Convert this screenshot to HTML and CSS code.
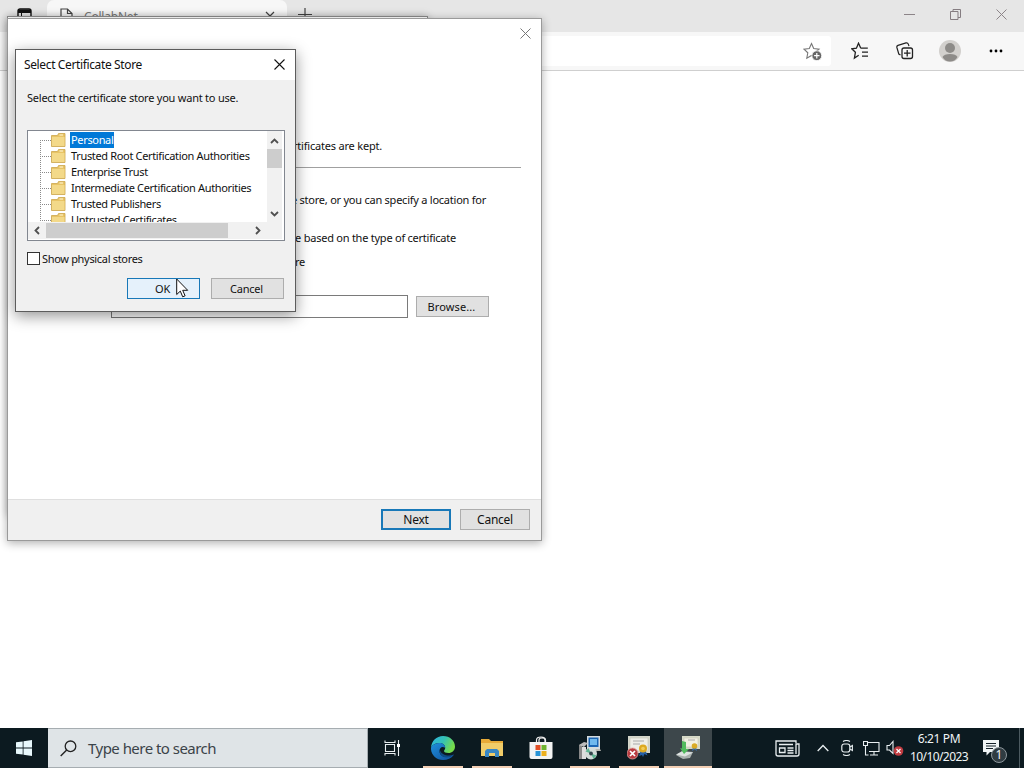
FILE: index.html
```html
<!DOCTYPE html>
<html lang="en">
<head>
  <meta charset="UTF-8">
  <title>Certificate Import</title>
  <link rel="stylesheet" href="styles.css">
</head>
<body>
  <div class="browser">
    <div class="tabbar">
      <div class="tab-actions">
        <svg width="15" height="15" viewBox="0 0 15 15"><rect x="1" y="1" width="13" height="13" rx="2" fill="none" stroke="#111" stroke-width="1.4"/><path d="M1 1.5h13v3.5H1z" fill="#111"/><path d="M4.5 5v9" stroke="#111"/></svg>
      </div>
      <div class="tab">
        <svg width="13" height="16" viewBox="0 0 13 16"><path d="M1 1h6.5l4.500 4.500V15H1zM7.500 1v4.500H12" fill="none" stroke="#444" stroke-width="1.200"/></svg>
        <span class="tab-title">CollabNet</span>
        <svg width="10" height="10" viewBox="0 0 10 10"><path d="M1 1l8 8M9 1l-8 8" stroke="#444" stroke-width="1.200"/></svg>
      </div>
      <svg class="new-tab" width="14" height="14" viewBox="0 0 14 14"><path d="M7 0v14M0 6.500h14" stroke="#444" stroke-width="1.200"/></svg>
      <div class="window-buttons">
        <span><svg width="11" height="11" viewBox="0 0 11 11"><path d="M0 5.500h11" stroke="#8c8488"/></svg></span>
        <span><svg width="11" height="11" viewBox="0 0 11 11"><path d="M.5 2.500h7.500v8H.5zM3 2.500v-2h7.500v8H8" fill="none" stroke="#857d81"/></svg></span>
        <span><svg width="11" height="11" viewBox="0 0 11 11"><path d="M.5.5l10 10M10.500.5l-10 10" stroke="#8c8488"/></svg></span>
      </div>
    </div>
    <div class="toolbar">
      <div class="address">
        <svg width="20" height="20" viewBox="0 0 20 20"><path d="M8.500 1.500l2.200 5 5.300.6-4 3.700 1 5.400-4.500-2.700-4.700 2.700 1-5.400L1 7.100l5.300-.6z" fill="none" stroke="#777" stroke-width="1.100"/><circle cx="13.800" cy="13.700" r="4.900" fill="#666" stroke="#fff" stroke-width=".8"/><path d="M13.800 11v5.400M11.100 13.700h5.400" stroke="#fff" stroke-width="1.200"/></svg>
      </div>
      <div class="toolbar-buttons">
        <span><svg width="18" height="18" viewBox="0 0 18 18"><path d="M9.800 6.200L7.500 1.200 5.400 6.200.8 6.800l3.600 3.500-1 5.800 4.300-2.800M9.800 6.200h7M11 10.200h6M11 14.200h6" fill="none" stroke="#222" stroke-width="1.300"/></svg></span>
        <span><svg width="18" height="18" viewBox="0 0 18 18"><path d="M4.500 13L2.800 12 .9 5.500Q.5 4 2 3.400L10 .9q1.700-.4 2.300 1.200l.7 2" fill="none" stroke="#222" stroke-width="1.200"/><rect x="6" y="6" width="10.500" height="10.500" rx="2" fill="#f7f7f7" stroke="#222" stroke-width="1.300"/><path d="M11.200 8v6.500M8 11.200h6.500" stroke="#222" stroke-width="1.300"/></svg></span>
        <span><svg width="22" height="22" viewBox="0 0 22 22"><circle cx="11" cy="11" r="11" fill="#d2d0cd"/><circle cx="11" cy="8" r="5" fill="#8d8b88"/><path d="M3.500 17q1.500-3 7.500-3t7.500 3q-2.500 4.500-7.500 4.500T3.500 17z" fill="#8d8b88"/></svg></span>
        <span><svg width="14" height="4" viewBox="0 0 14 4"><circle cx="2" cy="2" r="1.400"/><circle cx="7" cy="2" r="1.400"/><circle cx="12" cy="2" r="1.400"/></svg></span>
      </div>
    </div>
  </div>

  <div class="back-window"></div>

  <div class="wizard">
    <div class="wizard-title">
      <svg width="11" height="11" viewBox="0 0 11 11"><path d="M.5.5l10 10M10.500.5l-10 10" stroke="#777"/></svg>
    </div>
    <div class="wizard-header"><span>certificates are kept.</span></div>
    <div class="wizard-body">
      <p class="line-location">certificate store, or you can specify a location for</p>
      <p class="line-based">store based on the type of certificate</p>
      <p class="line-store">store</p>
      <div class="store-row">
        <div class="store-name"></div>
        <div class="button browse">Browse...</div>
      </div>
    </div>
    <div class="wizard-footer">
      <div class="button next">Next</div>
      <div class="button cancel">Cancel</div>
    </div>
  </div>

  <div class="dialog">
    <div class="dialog-title">
      <span>Select Certificate Store</span>
      <svg width="11" height="11" viewBox="0 0 11 11"><path d="M.5.5l10 10M10.500.5l-10 10" stroke="#111" stroke-width="1.100"/></svg>
    </div>
    <div class="dialog-body">
      <p class="hint">Select the certificate store you want to use.</p>
      <div class="tree">
        <div class="tree-main">
          <ul class="tree-items">
            <li><svg class="folder"><use href="#folder"/></svg><span class="selected">Personal</span></li>
            <li><svg class="folder"><use href="#folder"/></svg><span>Trusted Root Certification Authorities</span></li>
            <li><svg class="folder"><use href="#folder"/></svg><span>Enterprise Trust</span></li>
            <li><svg class="folder"><use href="#folder"/></svg><span>Intermediate Certification Authorities</span></li>
            <li><svg class="folder"><use href="#folder"/></svg><span>Trusted Publishers</span></li>
            <li><svg class="folder"><use href="#folder"/></svg><span>Untrusted Certificates</span></li>
          </ul>
          <div class="vscroll">
            <svg width="9" height="6" viewBox="0 0 9 6"><path d="M1 5l3.500-3.500L8 5" fill="none" stroke="#505050" stroke-width="1.800"/></svg>
            <div class="vthumb"></div>
            <svg width="9" height="6" viewBox="0 0 9 6"><path d="M1 1l3.500 3.500L8 1" fill="none" stroke="#505050" stroke-width="1.800"/></svg>
          </div>
        </div>
        <div class="hscroll">
          <svg width="6" height="9" viewBox="0 0 6 9"><path d="M5 1L1.500 4.500 5 8" fill="none" stroke="#505050" stroke-width="1.800"/></svg>
          <div class="hthumb"></div>
          <svg width="6" height="9" viewBox="0 0 6 9"><path d="M1 1l3.500 3.500L1 8" fill="none" stroke="#505050" stroke-width="1.800"/></svg>
        </div>
      </div>
      <div class="check-row">
        <div class="checkbox"></div>
        <span>Show physical stores</span>
      </div>
      <div class="dialog-buttons">
        <div class="button ok">OK</div>
        <div class="button dialog-cancel">Cancel</div>
      </div>
    </div>
  </div>

  <svg class="cursor" width="13" height="20" viewBox="0 0 13 20"><path d="M.7 1v15.500l3.600-3.400 2.400 5.700 2.400-1-2.400-5.500h5z" fill="#fff" stroke="#111"/></svg>

  <div class="taskbar">
    <div class="start">
      <svg width="16" height="16" viewBox="0 0 16 16"><path d="M0 2.300L6.700 1.400v6.200H0zM7.500 1.200L16 0v7.600H7.500zM0 8.400h6.700v6.200L0 13.700zM7.500 8.400H16V16l-8.500-1.200z" fill="#e8f8fc"/></svg>
    </div>
    <div class="search">
      <svg width="17" height="17" viewBox="0 0 17 17"><circle cx="10.500" cy="6.300" r="5.300" fill="none" stroke="#222" stroke-width="1.300"/><path d="M6.700 10.100L.7 16" stroke="#222" stroke-width="1.400"/></svg>
      <span>Type here to search</span>
    </div>
    <div class="taskview">
      <svg width="17" height="16" viewBox="0 0 17 16"><path d="M1 .5v2h10v-2M1 15.500v-2h10v2M1.500 4.500h9v7h-9zM14.500 0v16" fill="none" stroke="#e8eef0" stroke-width="1.100"/><path d="M13 4h3v3h-3z" fill="#fff"/></svg>
    </div>
    <div class="apps">
      <div class="app running">
        <svg width="24" height="24" viewBox="0 0 24 24">
          <defs>
            <linearGradient id="edge-top" x1="0" y1="0" x2="1" y2=".4"><stop offset="0" stop-color="#2bb3e4"/><stop offset=".55" stop-color="#35c2b4"/><stop offset="1" stop-color="#76db4a"/></linearGradient>
            <linearGradient id="edge-low" x1="0" y1="0" x2="1" y2="1"><stop offset="0" stop-color="#1f8fdc"/><stop offset="1" stop-color="#10509c"/></linearGradient>
          </defs>
          <path d="M0 11.500C.5 5 5.500 0 12 0c7 0 12 5 12 10.500 0 4-3 6.500-6.500 6.500-3 0-4.500-1-4.500-2 0-.8 1.200-1.200 1.200-3.200C14.200 9 11.500 7 8.500 7 4.500 7 1.300 9 0 11.500z" fill="url(#edge-top)"/>
          <path d="M0 11.500C1.500 8.500 4.800 7 8.500 7c3 0 5.700 2 5.700 4.800C11 9.500 8.500 12 8.500 15c0 4.500 4.500 6.500 8 6 2.500-.3 4-1.300 5.500-2.300.5-.3.800.1.500.5C20.500 22 16.500 24 12 24 5 24-.5 18.500 0 11.500z" fill="url(#edge-low)"/>
          <path d="M8.800 13.500c-1 4 2 8 6.500 8 3 0 5.300-1.300 6.700-2.800-4 1.800-12 .8-13.200-5.200z" fill="#0d4b85"/>
        </svg>
      </div>
      <div class="app running">
        <svg width="22" height="18" viewBox="0 0 22 18"><path d="M0 0h8l2 2h12v15H0z" fill="#e8ab38"/><path d="M0 4h22v13H0z" fill="#f1cd69"/><path d="M4 18v-6l2-2h10l2 2v6h-4v-4H8v4z" fill="#3987c4"/></svg>
      </div>
      <div class="app">
        <svg width="24" height="24" viewBox="0 0 24 24"><path d="M7.500 6V4q0-3 4.500-3t4.500 3v2M10 6V4q0-2 3-2t3 2v2" fill="none" stroke="#eee" stroke-width="1.200"/><path d="M.5 6h23v15q0 2-2 2h-19q-2 0-2-2z" fill="#f4f4f4"/><path d="M6.500 9h5v5h-5z" fill="#e34f26"/><path d="M12.500 9h5v5h-5z" fill="#70b430"/><path d="M6.500 15h5v5h-5z" fill="#2a94d6"/><path d="M12.500 15h5v5h-5z" fill="#edb120"/></svg>
      </div>
      <div class="app running">
        <svg width="24" height="24" viewBox="0 0 24 24"><path d="M9 0h13v13H9z" fill="#d5dcdf"/><path d="M10.500 1.500h10V11h-10z" fill="#1b66b4"/><path d="M12 3h7v6h-7z" fill="#6fb9ee"/><path d="M11 13h11l1 2H12z" fill="#b8b8b0"/><path d="M1 9l3-1v15H1z" fill="#888"/><path d="M4 11h4v12H4z" fill="#ddd"/><path d="M1 9l5-3 4 1-4 4z" fill="#bbb"/><circle cx="13" cy="17.500" r="6" fill="#d3dcd9"/><path d="M13 17.500l-5.500-2 3-3.500zM13 17.500l5.500 2-3 3.500z" fill="#5fb592"/><circle cx="13" cy="17.500" r="1.900" fill="#34464c"/></svg>
      </div>
      <div class="app running">
        <svg width="24" height="24" viewBox="0 0 24 24"><path d="M1 0h22v17H1z" fill="#d4d6cb"/><path d="M3 2h18v13H3z" fill="#eeeee8" stroke="#c5c7b6" stroke-width=".6"/><path d="M6 5h11M6 8h7" stroke="#aaa"/><path d="M13.500 15l-1.500 5 3-1 1 2 1.500-3 3 1.500-2-5z" fill="#245fa6"/><circle cx="16" cy="12.500" r="4" fill="#dca921"/><circle cx="16" cy="12.500" r="1.800" fill="#f2cd58"/><circle cx="5.500" cy="17.500" r="5.500" fill="#b93b40" stroke="#dda5a0" stroke-width=".8"/><path d="M3 15l5 5M8 15l-5 5" stroke="#fff" stroke-width="1.700"/></svg>
      </div>
      <div class="app running active">
        <svg width="24" height="24" viewBox="0 0 24 24"><path d="M6 0h18v13H6z" fill="#d6dac8"/><path d="M8 2h14v9H8z" fill="#f1f0e3" stroke="#c9cbbb" stroke-width=".6"/><path d="M12 4h7" stroke="#aaa"/><path d="M17 11l-1 4 2.500-1.500L21 15l-1-4z" fill="#3a6ea8"/><circle cx="18.500" cy="10" r="2.800" fill="#d9ab26"/><path d="M0 19l6-4 11 1-3 6-7 1z" fill="#aab1af"/><path d="M0 18.500l6-3 11 1-8 4z" fill="#dfe4e2"/><path d="M6 5l4 1v7h3l-5 5-4-6 2 .5z" fill="#52bb5e"/></svg>
      </div>
    </div>
    <div class="tray">
      <svg class="news" width="25" height="17" viewBox="0 0 25 17"><path d="M21 3V1H1v13q0 2 2 2h19q2 0 2-2V4h-3v10" fill="none" stroke="#e8eef0" stroke-width="1.300"/><path d="M4 4.500h14M12.500 8h6M12.500 10.500h6M12.500 13h6M4.500 8h5.500v4.500H4.500z" fill="none" stroke="#e8eef0" stroke-width="1.300"/></svg>
      <svg class="chevron" width="12" height="8" viewBox="0 0 12 8"><path d="M.7 7L6 1.500 11.300 7" fill="none" stroke="#e8eef0" stroke-width="1.300"/></svg>
      <svg class="meet" width="12" height="16" viewBox="0 0 12 16"><path d="M2 1.500q3.500-2 7 0M2 14.500q3.500 2 7 0M9 7l2.400-1.500v5L9 9" fill="none" stroke="#e8eef0" stroke-width="1.100"/><rect x=".8" y="4" width="8" height="8" rx="2.200" fill="none" stroke="#e8eef0" stroke-width="1.200"/></svg>
      <svg class="network" width="17" height="15" viewBox="0 0 17 15"><path d="M5 1.500h11v9H6M11 11v3M7 14h8M.5.5h4v4h-4zM2.500 4.500V14h3" fill="none" stroke="#e8eef0" stroke-width="1.100"/></svg>
      <svg class="volume" width="18" height="16" viewBox="0 0 18 16"><path d="M1 5.500h2.500L7 1.500v12L3.500 10H1z" fill="none" stroke="#e8eef0" stroke-width="1.100"/><circle cx="12.500" cy="11" r="4.800" fill="#c03b40"/><path d="M10.500 9l4 4M14.500 9l-4 4" stroke="#fff" stroke-width="1.200"/></svg>
      <div class="clock"><span class="time">6:21 PM</span><span class="date">10/10/2023</span></div>
      <div class="notify">
        <svg width="17" height="16" viewBox="0 0 17 16"><path d="M0 0h16v12H7l-3.500 3.500V12H0z" fill="#f1f5f6"/><path d="M3 3.500h10M3 6h10M3 8.500h7" stroke="#15222a"/></svg>
        <span class="badge">1</span>
      </div>
      <div class="show-desktop"></div>
    </div>
  </div>

  <svg width="0" height="0" class="symbols">
    <symbol id="folder" viewBox="0 0 15 14">
      <path d="M.5 2.500h6l1-2H14v13H.5z" fill="#e8c466" stroke="#cba64c" stroke-width=".8"/>
      <path d="M1 4h12.500v9H1z" fill="#f3d989"/>
      <path d="M8.500 2h3.500" stroke="#fff7d8"/>
    </symbol>
  </svg>
</body>
</html>
```
FILE: styles.css
```css
* {
  box-sizing: border-box;
}
body {
  margin: 0;
  width: 1024px;
  height: 768px;
  overflow: hidden;
  position: relative;
  display: flex;
  flex-direction: column;
  background-color: #fff;
  color: #111;
  font-family: "Noto Sans", sans-serif;
  font-size: 11px;
}
svg {
  display: block;
  flex: none;
}
p, ul {
  margin: 0;
  padding: 0;
}
p, span {
  white-space: nowrap;
}
.symbols {
  position: absolute;
}

/* browser */
.browser {
  flex: 1;
}
.tabbar {
  height: 32px;
  background-color: #e6e6e6;
  display: flex;
}
.tab-actions {
  width: 47px;
  padding: 8px 0 0 17px;
}
.tab {
  width: 240px;
  background-color: #f7f7f7;
  border-radius: 7px 7px 0 0;
  display: flex;
  align-items: center;
  padding: 0 12px 0 13px;
}
.tab-title {
  flex: 1;
  padding-left: 11px;
  font-size: 12px;
  letter-spacing: -.2px;
  color: #777;
}
.new-tab {
  margin: 8px 0 0 11px;
}
.window-buttons {
  margin-left: auto;
  display: flex;
  height: 29px;
}
.window-buttons span {
  width: 46px;
  display: flex;
  align-items: center;
  justify-content: center;
}
.toolbar {
  height: 39px;
  background-color: #f7f7f7;
  border-bottom: 1px solid #cfcfcf;
  display: flex;
  align-items: center;
  justify-content: flex-end;
  padding-right: 6px;
}
.address {
  width: 531px;
  height: 30px;
  margin-right: 7px;
  background-color: #fff;
  border-radius: 3px;
  display: flex;
  align-items: center;
  justify-content: flex-end;
  padding: 1px 8px 0 0;
}
.toolbar-buttons {
  display: flex;
}
.toolbar-buttons span {
  width: 45px;
  display: flex;
  align-items: center;
  justify-content: center;
  padding-right: 1px;
}
.toolbar-buttons span:last-child {
  padding-right: 0;
}

/* windows */
.back-window {
  position: absolute;
  left: 7px;
  top: 16px;
  width: 421px;
  height: 500px;
  background-color: #fff;
  border: 1px solid #8a8a8a;
  box-shadow: 0 0 8px rgba(0, 0, 0, .25);
}
.wizard {
  position: absolute;
  left: 7px;
  top: 18px;
  width: 535px;
  height: 523px;
  background-color: #fff;
  border: 1px solid #9a9a9a;
  box-shadow: 0 2px 9px rgba(0, 0, 0, .32);
  display: flex;
  flex-direction: column;
}
.wizard-title {
  height: 30px;
  display: flex;
  justify-content: flex-end;
  padding: 9px 10px 0 0;
}
.wizard-header {
  height: 119px;
  margin: 0 20px;
  border-bottom: 1px solid #a0a0a0;
  display: flex;
  align-items: flex-end;
  justify-content: flex-end;
  padding: 0 139px 14px 0;
  letter-spacing: -.2px;
}
.wizard-body {
  flex: 1;
  padding-left: 103px;
}
.wizard-body p {
  line-height: 16px;
  text-align: right;
  letter-spacing: -.24px;
}
.line-location {
  width: 375px;
  padding-top: 24px;
}
.line-based {
  width: 345px;
  padding-top: 22px;
}
.line-store {
  width: 194px;
  padding-top: 8px;
}
.store-row {
  display: flex;
  gap: 8px;
  margin-top: 25px;
}
.store-name {
  width: 297px;
  height: 23px;
  border: 1px solid #7a7a7a;
}
.button {
  background-color: #e1e1e1;
  border: 1px solid #adadad;
  display: flex;
  align-items: center;
  justify-content: center;
}
.browse {
  width: 73px;
  height: 21px;
  margin-top: 1px;
  padding-right: 2px;
  letter-spacing: .1px;
}
.wizard-footer {
  height: 41px;
  background-color: #f0f0f0;
  border-top: 1px solid #dfdfdf;
  display: flex;
  justify-content: flex-end;
  gap: 9px;
  padding: 9px 11px 0 0;
  font-size: 12px;
  letter-spacing: -.25px;
}
.next, .cancel {
  width: 70px;
  height: 21px;
}
.next {
  border: 2px solid #1878b8;
}

/* certificate store dialog */
.dialog {
  position: absolute;
  left: 15px;
  top: 49px;
  width: 281px;
  height: 263px;
  background-color: #f0f0f0;
  border: 1px solid #5c5c5c;
  box-shadow: 0 4px 14px rgba(0, 0, 0, .42);
}
.dialog-title {
  height: 30px;
  background-color: #fff;
  display: flex;
  align-items: center;
  justify-content: space-between;
  padding: 0 10px 1px 8px;
  font-size: 12px;
  letter-spacing: -.37px;
}
.dialog-body {
  padding: 10px 11px 0;
}
.hint {
  height: 40px;
  line-height: 16px;
  letter-spacing: -.23px;
}
.tree {
  width: 258px;
  height: 111px;
  border: 1px solid #828790;
  background-color: #fff;
}
.tree-main {
  display: flex;
  height: 91px;
}
.tree-items {
  width: 239px;
  overflow: hidden;
  list-style: none;
  padding: 1px 0 0 12px;
  letter-spacing: -.34px;
  background: repeating-linear-gradient(#8a8a8a 0 1px, #fff 1px 2px) 12px 9px / 1px 90px no-repeat;
}
.tree-items li {
  height: 16px;
  display: flex;
  align-items: center;
}
.tree-items li::before {
  content: "";
  width: 11px;
  height: 1px;
  background: repeating-linear-gradient(90deg, #8a8a8a 0 1px, #fff 1px 2px);
}
.tree-items span {
  line-height: 16px;
  margin-left: 4px;
  padding: 0 1px;
}
.tree-items .selected {
  background-color: #0078d7;
  color: #fff;
}
.folder {
  width: 15px;
  height: 14px;
}
.vscroll {
  width: 15px;
  background-color: #f1f1f1;
  display: flex;
  flex-direction: column;
  align-items: center;
  padding: 7px 0 5px;
}
.vthumb {
  width: 15px;
  height: 19px;
  margin: 5px 0 auto;
  background-color: #cdcdcd;
}
.hscroll {
  height: 17px;
  margin-right: 2px;
  background-color: #f1f1f1;
  display: flex;
  align-items: center;
  padding: 0 0 1px 6px;
}
.hthumb {
  width: 182px;
  height: 15px;
  margin: 0 27px 0 6px;
  background-color: #cdcdcd;
}
.check-row {
  display: flex;
  align-items: center;
  gap: 2px;
  height: 13px;
  margin-top: 11px;
  letter-spacing: -.32px;
}
.checkbox {
  width: 13px;
  height: 13px;
  border: 1px solid #333;
  background-color: #fff;
}
.dialog-buttons {
  display: flex;
  justify-content: flex-end;
  gap: 11px;
  margin-top: 13px;
}
.ok, .dialog-cancel {
  width: 73px;
  height: 21px;
  padding-right: 2px;
  letter-spacing: -.2px;
}
.ok {
  background-color: #e5f1fb;
  border-color: #1878b8;
}
.cursor {
  position: absolute;
  left: 176px;
  top: 278px;
}

/* taskbar */
.taskbar {
  height: 40px;
  background-color: #0c1a20;
  display: flex;
}
.start {
  width: 48px;
  display: flex;
  align-items: center;
  justify-content: center;
}
.search {
  width: 320px;
  background-color: #dfe4e7;
  border: 1px solid #a6adb1;
  border-left: none;
  display: flex;
  align-items: center;
  gap: 11px;
  padding-left: 12px;
  font-size: 15px;
  letter-spacing: -.53px;
  color: #3b4349;
}
.taskview {
  width: 51px;
  display: flex;
  align-items: center;
  padding-left: 16px;
}
.apps {
  display: flex;
  gap: 1px;
}
.app {
  width: 48px;
  display: flex;
  align-items: center;
  justify-content: center;
  position: relative;
}
.running::after {
  content: "";
  position: absolute;
  left: 4px;
  right: 4px;
  bottom: 0;
  height: 2px;
  background-color: #f3cfb4;
}
.active {
  background-color: #3d474b;
}
.active::after {
  left: 0;
  right: 0;
}
.tray {
  flex: 1;
  display: flex;
  align-items: center;
  padding-left: 63px;
  color: #f1f5f6;
}
.chevron {
  margin-left: 17px;
}
.meet {
  margin-left: 12px;
}
.network {
  margin-left: 10px;
}
.volume {
  margin-left: 6px;
}
.clock {
  width: 70px;
  display: flex;
  flex-direction: column;
  align-items: center;
  font-size: 12px;
  line-height: 18px;
}
.time {
  letter-spacing: -.35px;
}
.date {
  letter-spacing: -.6px;
}
.notify {
  position: relative;
  margin-left: 9px;
}
.badge {
  position: absolute;
  left: 8px;
  top: 7px;
  width: 16px;
  height: 16px;
  border: 1px solid #8d979c;
  border-radius: 50%;
  background-color: #303c42;
  font-size: 12px;
  line-height: 14px;
  text-align: center;
}
.show-desktop {
  margin-left: auto;
  width: 5px;
  height: 40px;
  border-left: 1px solid #4c5a60;
}
```
